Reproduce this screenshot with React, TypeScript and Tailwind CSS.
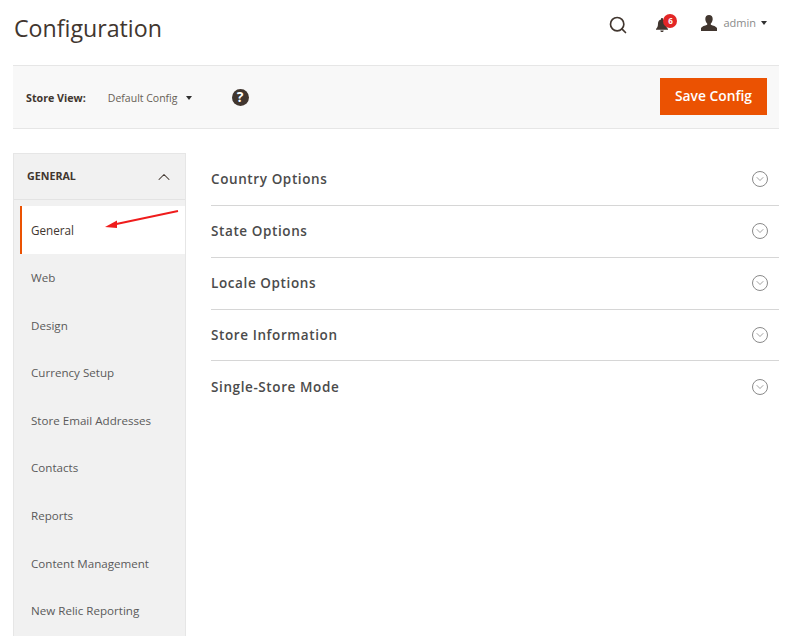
import { ChevronDown, ChevronUp, Search } from "lucide-react";

const font = "font-['Open_Sans',sans-serif]";

const menuItems = [
  "Web",
  "Design",
  "Currency Setup",
  "Store Email Addresses",
  "Contacts",
  "Reports",
  "Content Management",
  "New Relic Reporting",
];

const sections = [
  "Country Options",
  "State Options",
  "Locale Options",
  "Store Information",
  "Single-Store Mode",
];

function Caret() {
  return <span className="inline-block w-0 h-0 border-x-[3.5px] border-x-transparent border-t-[4px] border-t-[#303030]" />;
}

function Bell() {
  return (
    <svg width="14" height="16" viewBox="0 0 14 16" fill="#41362f">
      <path d="M7 1c-.6 0-1 .4-1 1v.4C3.9 2.900 3 4.500 3 6.500c0 3-.8 4.300-2 5.500v.8h12V12c-1.200-1.200-2-2.500-2-5.500 0-2-.9-3.600-3-4.100V2c0-.6-.4-1-1-1z" />
      <path d="M5.300 13.500h3.400C8.600 14.500 7.900 15 7 15s-1.600-.5-1.700-1.500z" />
    </svg>
  );
}

function User() {
  return (
    <svg width="18" height="16" viewBox="0 0 18 16" fill="#41362f">
      <path d="M9 0c2.300 0 3.700 1.600 3.700 4 0 1.800-.8 3.600-1.900 4.500v1.300c2.500.8 5.200 1.700 6.200 3.200V16H1v-3c1-1.500 3.700-2.400 6.200-3.200V8.500C6.100 7.600 5.300 5.800 5.300 4 5.300 1.600 6.700 0 9 0z" />
    </svg>
  );
}

export default function App() {
  return (
    <div className={`${font} w-[800px] h-[636px] overflow-hidden bg-white pl-[13px] pr-[21px] text-[#41362f]`}>
      <header className="flex items-center h-[65px] pr-[12px]">
        <h1 className="ml-px text-[23.2px] text-[#41362f] leading-none pb-[7px]">Configuration</h1>
        <div className="ml-auto flex items-center pb-[19px]">
          <Search size={20} strokeWidth={2} className="text-[#41362f] mr-[27px] mt-[4px]" />
          <div className="relative mr-[31px] h-[16px] mt-[4px]">
            <Bell />
            <span className="absolute left-[8px] top-[-3px] flex items-center justify-center w-[14px] h-[14px] rounded-full bg-[#e22626] text-white text-[8px] font-bold">6</span>
          </div>
          <User />
          <span className="ml-[5px] mr-[5px] text-[11px] text-[#8a8a8a]">admin</span>
          <Caret />
        </div>
      </header>

      <div className="flex items-center h-[64px] bg-[#f8f8f8] border-y border-[#e6e6e6] pl-[13px] pr-[12px]">
        <span className="mt-[2px] text-[10.7px] font-bold text-[#41362f]">Store View:</span>
        <span className="mt-[3px] ml-[22px] text-[10.5px] text-[#676056]">Default Config</span>
        <span className="ml-[8px] mt-[2px] flex"><Caret /></span>
        <span className="ml-[40px] flex items-center justify-center w-[17px] h-[17px] rounded-full bg-[#41362f] text-white text-[14px] font-bold leading-none">?</span>
        <button className="ml-auto mb-[2px] w-[107px] h-[37px] bg-[#eb5202] text-white text-[13.8px] font-semibold">Save Config</button>
      </div>

      <div className="flex mt-[24px]">
        <aside className="w-[173px] shrink-0 bg-[#f1f1f1] border border-[#e6e6e6] border-b-0 h-[483px]">
          <div className="flex items-center justify-between h-[46px] pl-[13px] pr-[11px] border-b border-[#e3e3e3]">
            <span className="text-[10.7px] font-bold text-[#41362f]">GENERAL</span>
            <ChevronUp size={20} strokeWidth={1.25} className="text-[#41362f]" />
          </div>
          <div className="flex items-center h-[48px] mt-[6px] ml-[6px] pl-[9px] pt-px bg-white border-l-[2px] border-[#eb5202] text-[11.7px] text-[#41362f]">
            General
          </div>
          {menuItems.map((item) => (
            <div key={item} className="flex items-center h-[47.6px] pl-[17px] text-[11.6px] text-[#5a5a5a]">
              {item}
            </div>
          ))}
        </aside>

        <main className="flex-1 ml-[25px] pt-px">
          {sections.map((section, i) => (
            <div
              key={section}
              className={`flex items-center justify-between h-[51.85px] pr-[11px] ${i < sections.length - 1 ? "border-b border-[#d6d6d6]" : ""}`}
            >
              <span className="text-[13.5px] font-semibold tracking-[0.6px] text-[#4b4b4b]">{section}</span>
              <span className="flex items-center justify-center w-[16px] h-[16px] rounded-full border border-[#8a8a8a]">
                <ChevronDown size={12} strokeWidth={1.25} className="text-[#666]" />
              </span>
            </div>
          ))}
        </main>
      </div>

      <svg className="absolute left-[100px] top-[205px]" width="85" height="30" viewBox="0 0 85 30" fill="none">
        <path d="M78 6 L14 19.500" stroke="#ef1c1c" strokeWidth="1.800" />
        <path d="M5 22 L17 15.500 L17 23 Z" fill="#ef1c1c" />
      </svg>
    </div>
  );
}
